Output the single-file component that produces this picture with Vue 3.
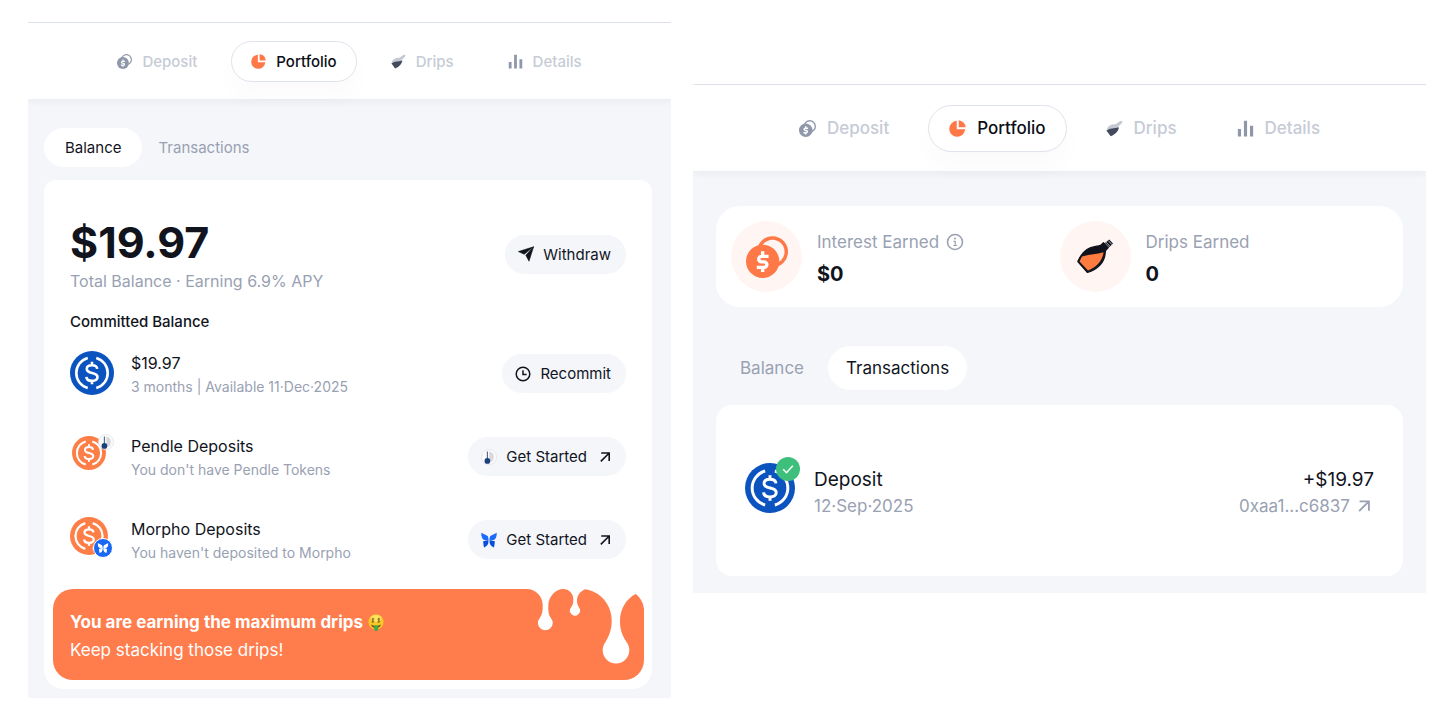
<template>
  <!-- shared shapes -->
  <svg class="sprite" aria-hidden="true">
    <symbol id="coins" viewBox="0 0 32 32">
      <circle cx="20.200" cy="12" r="10.500" fill="none" stroke="currentColor" stroke-width="2.600" />
      <circle cx="12.700" cy="19.300" r="12.700" fill="currentColor" />
      <path d="M17.200 15.500h-5.400a2.100 2.100 0 0 0 0 4.200h2a2.100 2.100 0 0 1 0 4.200H8.200M12.700 11.600v3.400M12.700 24v3.400" fill="none" stroke="#fff" stroke-width="2.600" />
    </symbol>
    <symbol id="pie" viewBox="0 0 16 16">
      <path d="M7.300 .8V8.700h7.900A7.500 7.500 0 1 1 7.300 .8z" fill="currentColor" />
      <path d="M9.200 .2a7.200 7.200 0 0 1 6.500 6.600H9.200z" fill="currentColor" />
    </symbol>
    <symbol id="flask" viewBox="0 0 16 16">
      <path d="M.6 8.700C2 5.500 5 3.800 9 4L12.800 1.300 14.600 .6l1 1.200-.9 1.500-3 2.500-.7 2z" fill="#c3c8d2" />
      <path d="M.4 9.800C3 7.700 7.500 8 12.200 6.800c-.5 3.400-3.200 6.700-7.800 8.600z" fill="#434a5c" />
    </symbol>
    <symbol id="bars" viewBox="0 0 16 16">
      <path d="M.8 8.500h3v7h-3zM6.500 .8h3v14.700h-3zM12.200 5.500h3v10h-3z" fill="currentColor" />
    </symbol>
    <symbol id="usdc" viewBox="0 0 32 32">
      <circle cx="16" cy="16" r="16" fill="currentColor" />
      <path d="M12.900 5.100a11.300 11.300 0 0 0 0 21.800M19.100 5.100a11.300 11.300 0 0 1 0 21.800" fill="none" stroke="#fff" stroke-width="1.900" />
      <path d="M19.800 13c-.2-1.700-1.600-2.600-3.800-2.600-2.300 0-3.800 1-3.800 2.700 0 4 7.800 1.800 7.800 5.800 0 1.700-1.600 2.800-4 2.800-2.300 0-4-1-4.100-2.900M16 7.800v2.600M16 21.600v2.600" fill="none" stroke="#fff" stroke-width="1.900" />
    </symbol>
    <symbol id="pendle" viewBox="0 0 18 18">
      <circle cx="9" cy="9" r="8.500" fill="#fbfbfc" stroke="#dfe2e8" stroke-width=".8" />
      <path d="M9.300 2.800a6.200 6.200 0 0 1 0 12.200z" fill="#d8d9dc" />
      <path d="M7.200 2.700v9" stroke="#52698f" stroke-width="1.300" />
      <circle cx="7.200" cy="13.400" r="3.200" fill="#1b3f7d" />
    </symbol>
    <symbol id="butterfly" viewBox="0 0 18 18">
      <path d="M.3 .8 7.500 4.600C8.300 6 8.600 8 8.400 9.700L4.500 9.400C1.500 8.500 .1 5.500 .3 .8zM17.700 .8 10.500 4.600C9.700 6 9.400 8 9.600 9.700l3.900-.3c3-.9 4.400-3.900 4.200-8.600z" fill="currentColor" />
      <path d="M8.200 9.200 2.400 10.500c.1 2.600.6 4.900 1 6.800 3-.6 5-3 5-6.500zM9.800 9.200l5.800 1.300c-.1 2.600-.6 4.900-1 6.800-3-.6-5-3-5-6.500z" fill="var(--wing, currentColor)" />
    </symbol>
    <symbol id="send" viewBox="0 0 16 16">
      <path d="M15.600 .8 .4 5.600 6.200 8.300zM15.600 .8 11 15.200 7.800 9.200z" fill="currentColor" stroke="currentColor" stroke-width=".6" stroke-linejoin="round" />
    </symbol>
    <symbol id="clock" viewBox="0 0 16 16">
      <circle cx="8" cy="8" r="6.800" fill="none" stroke="currentColor" stroke-width="1.500" />
      <path d="M8 4.200v4.300h3.600" fill="none" stroke="currentColor" stroke-width="1.500" />
    </symbol>
    <symbol id="arrow" viewBox="0 0 12 12">
      <path d="M2.200 2h8v8M10 2.200 1.800 10.400" fill="none" stroke="currentColor" stroke-width="1.600" />
    </symbol>
  </svg>

  <main class="page">
    <section v-for="panel in panels" :key="panel.id" class="panel" :class="panel.id">
      <nav class="nav">
        <a v-for="item in navItems" :key="item.label" href="#" class="nav-item" :class="{ active: item.label === 'Portfolio' }" @click.prevent>
          <svg class="nav-icon"><use :href="'#' + item.icon" /></svg>
          {{ item.label }}
        </a>
      </nav>

      <div class="content">
        <div v-if="panel.id === 'activity'" class="stats">
          <div class="stat">
            <div class="stat-icon">
              <svg class="stat-coins"><use href="#coins" /></svg>
            </div>
            <div class="stat-text">
              <div class="stat-label">
                Interest Earned
                <svg class="info" viewBox="0 0 18 18">
                  <circle cx="9" cy="9" r="7.500" fill="none" stroke="currentColor" stroke-width="1.600" />
                  <path d="M7.500 8.300H9.200v4M7.300 12.500h3.800" fill="none" stroke="currentColor" stroke-width="1.200" />
                  <circle cx="9" cy="5.600" r="1" fill="currentColor" />
                </svg>
              </div>
              <div class="stat-value">$0</div>
            </div>
          </div>
          <div class="stat">
            <div class="stat-icon">
              <svg class="stat-flask" viewBox="0 0 38 38">
                <path d="M1.800 23.500C5 16 10 9.500 19 8.500c2.500-.2 4.500-.3 6-1.500l2.500-2.300 4.800 5-2.500 2.600c-.6.900-.5 2-.7 3.800C28.300 24 22 31.500 11.500 34.500z" fill="#10131c" stroke="#10131c" stroke-width="1.200" stroke-linejoin="round" />
                <path d="M6 18.500C12 16.500 20 16.500 27.500 14.200 26.800 22 20.500 29.500 12 32.600L3.500 23.600z" fill="#ff7c40" />
                <path d="M29 5 33.200 1.500 37 5.600 33.200 9.300z" fill="#10131c" />
                <path d="m30.200 4.200 3.800 4.200M32.300 2.700l3.700 4" stroke="#d6d7da" stroke-width=".8" />
              </svg>
            </div>
            <div class="stat-text">
              <div class="stat-label">Drips Earned</div>
              <div class="stat-value">0</div>
            </div>
          </div>
        </div>

        <div class="tabs">
          <button v-for="tab in tabs" :key="tab" type="button" class="tab" :class="{ active: tab === panel.tab }" @click="panel.tab = tab">
            {{ tab }}
          </button>
        </div>

        <div v-if="panel.id === 'overview'" class="card balance-card">
          <div class="row">
            <div class="grow">
              <h1 class="total">$19.97</h1>
              <p class="total-note">Total Balance · Earning 6.9% APY</p>
            </div>
            <button type="button" class="pill">
              <svg class="pill-icon"><use href="#send" /></svg>
              Withdraw
            </button>
          </div>

          <h2 class="subhead">Committed Balance</h2>

          <div class="rows">
            <div v-for="row in rows" :key="row.title" class="row">
              <div class="token" :class="row.kind">
                <svg class="token-coin"><use href="#usdc" /></svg>
                <svg v-if="row.kind === 'pendle'" class="token-badge"><use href="#pendle" /></svg>
                <svg v-if="row.kind === 'morpho'" class="token-badge" viewBox="0 0 20 20">
                  <circle cx="10" cy="10" r="9.500" fill="#1868f5" stroke="#fff" />
                  <use href="#butterfly" x="4.500" y="4.500" width="11" height="11" />
                </svg>
              </div>
              <div class="grow">
                <div class="row-title">{{ row.title }}</div>
                <div class="row-note">{{ row.note }}</div>
              </div>
              <button type="button" class="pill">
                <svg class="pill-icon" :class="row.icon"><use :href="'#' + row.icon" /></svg>
                {{ row.action }}
                <svg v-if="row.kind !== 'plain'" class="pill-arrow"><use href="#arrow" /></svg>
              </button>
            </div>
          </div>

          <div class="banner">
            <p class="banner-title">
              You are earning the maximum drips
              <svg class="emoji" viewBox="0 0 16 17" role="img" aria-label="money face">
                <circle cx="8" cy="7.800" r="7.600" fill="#f8c928" />
                <ellipse cx="8" cy="4.500" rx="5.500" ry="3.500" fill="#fde361" />
                <path d="M3 10.200c2.500 2.200 7.500 2.200 10 0-.4 2.400-2.200 3.800-5 3.800s-4.600-1.400-5-3.800z" fill="#7b4a16" />
                <path d="M6.200 11.600h4V15a2 1.900 0 0 1-4 0z" fill="#3cae49" />
                <path d="M6.300 5c-2-.9-3 .9-1.400 1.500 1.700.7.600 2.200-1.300 1.400M4.900 3.800v5M12.200 5c-2-.9-3 .9-1.400 1.500 1.700.7.600 2.200-1.300 1.400M10.800 3.800v5" fill="none" stroke="#8a5b14" stroke-width=".9" />
              </svg>
            </p>
            <p>Keep stacking those drips!</p>
            <svg class="drips" viewBox="0 0 120 91" aria-hidden="true">
              <path d="M2.700-1V0C11.500 0 18.700 7.200 18.700 16c.3 6-.7 10-3.100 13.200a7.400 7.400 0 1 0 11.400 0C24.600 26 24 22 24.300 17 24.300 8 31 0 39.300 0c5.700 0 10 4.500 10 10 .2 4-.5 6-2.300 8.600a5 5 0 1 0 8 0c-1.600-2.600-2.200-5.600-2-7.600.2-5 4-9 8-10.700C76 2 87.700 16 87.700 31c0 9-1.700 14-6.200 22a13.300 13.300 0 1 0 21 0C97.500 45 96 40 96 32c0-12 6-22 15.700-27 5.300 4 8 10 8.300 15h1V-1z" fill="#fff" />
            </svg>
          </div>
        </div>

        <div v-else class="card activity-card">
          <div class="row">
            <div class="token tx">
              <svg class="token-coin"><use href="#usdc" /></svg>
              <svg class="token-badge" viewBox="0 0 24 24">
                <circle cx="12" cy="12" r="12" fill="#3fbf7c" />
                <path d="m7.200 12.300 3.300 3.400 6.300-7" fill="none" stroke="#fff" stroke-width="1.500" />
              </svg>
            </div>
            <div class="grow">
              <div class="row-title">Deposit</div>
              <div class="row-note">12·Sep·2025</div>
            </div>
            <div class="amount">
              <div class="row-title">+$19.97</div>
              <a href="#" class="row-note hash" @click.prevent>
                0xaa1...c6837
                <svg class="hash-arrow"><use href="#arrow" /></svg>
              </a>
            </div>
          </div>
        </div>
      </div>
    </section>
  </main>
</template>

<script setup>
import { ref } from 'vue';

const tabs = ['Balance', 'Transactions'];

const panels = ref([
  { id: 'overview', tab: 'Balance' },
  { id: 'activity', tab: 'Transactions' }
]);

const navItems = [
  { label: 'Deposit', icon: 'coins' },
  { label: 'Portfolio', icon: 'pie' },
  { label: 'Drips', icon: 'flask' },
  { label: 'Details', icon: 'bars' }
];

const rows = [
  { kind: 'plain', title: '$19.97', note: '3 months | Available 11·Dec·2025', action: 'Recommit', icon: 'clock' },
  { kind: 'pendle', title: 'Pendle Deposits', note: "You don't have Pendle Tokens", action: 'Get Started', icon: 'pendle' },
  { kind: 'morpho', title: 'Morpho Deposits', note: "You haven't deposited to Morpho", action: 'Get Started', icon: 'butterfly' }
];
</script>

<style>
body {
  margin: 0;
  background: #fff;
}
</style>

<style scoped>
.sprite {
  position: absolute;
  width: 0;
  height: 0;
}
.page {
  display: grid;
  grid-template-columns: 643fr 733fr;
  align-items: start;
  gap: 22px;
  padding: 22px 30px 24px 28px;
  font-family: Inter, "Liberation Sans", sans-serif;
  color: #11141d;
}
svg {
  display: block;
  flex: none;
}
h1, h2, p {
  margin: 0;
}
button {
  border: none;
  font-family: inherit;
  cursor: pointer;
}
a {
  color: inherit;
  text-decoration: none;
}

.panel {
  border-top: 1px solid #dde1e8;
}
.nav {
  position: relative;
  display: flex;
  justify-content: center;
  align-items: center;
  gap: 14px;
  height: 76px;
  background: #fff;
  box-shadow: 0 2px 8px rgba(30, 40, 70, 0.06);
  clip-path: inset(0 0 -40px 0);
}
.nav-item {
  display: flex;
  align-items: center;
  gap: 10px;
  box-sizing: border-box;
  height: 41px;
  padding: 0 19px;
  border: 1px solid transparent;
  border-radius: 24px;
  font-size: 15px;
  font-weight: 500;
  color: #c6cbd6;
}
.nav-item.active {
  border-color: #dfe3ec;
  background: #fff;
  box-shadow: 0 16px 24px rgba(0, 0, 0, 0.02);
  color: #0b0e16;
}
.nav-icon {
  width: 15px;
  height: 15px;
  color: #8f98ab;
}
.active .nav-icon {
  color: #ff7847;
}
.content {
  padding: 29px 19px 9px 16px;
  background: #f4f6fa;
}

.tabs {
  display: flex;
  margin-bottom: 13px;
}
.tab {
  height: 39px;
  padding: 0 16px;
  border-radius: 22px;
  background: none;
  font-size: 15px;
  color: #99a1b2;
}
.tab.active {
  padding: 0 21px;
  background: #fff;
  color: #11141d;
}

.card {
  background: #fff;
}
.balance-card {
  padding: 40px 8px 9px 9px;
  border-radius: 12px 12px 20px 20px;
}
.row {
  display: flex;
  align-items: center;
}
.balance-card .row {
  padding: 0 18px 0 17px;
}
.grow {
  flex: 1;
}
.total {
  font-size: 43px;
  line-height: 44px;
  font-weight: 700;
}
.total-note {
  margin-top: 7px;
  font-size: 16px;
  line-height: 20px;
  color: #99a1b2;
}
.subhead {
  margin: 21px 17px 19px;
  font-size: 15px;
  line-height: 20px;
  font-weight: 500;
}
.rows {
  display: grid;
  gap: 35px;
}
.row-title {
  font-size: 16px;
  line-height: 24px;
}
.row-note {
  font-size: 14px;
  line-height: 24px;
  color: #99a1b2;
}

.token {
  position: relative;
  align-self: flex-start;
  width: 44px;
  height: 44px;
  margin-right: 17px;
  color: #0b53bf;
}
.token-coin {
  width: 44px;
  height: 44px;
}
.token-badge {
  position: absolute;
}
.pendle,
.morpho {
  color: #fd7f47;
}
.pendle .token-coin {
  width: 34px;
  height: 34px;
  margin: 2px;
}
.pendle .token-badge {
  top: 0;
  right: 0;
  width: 16px;
  height: 16px;
}
.morpho .token-coin {
  width: 38px;
  height: 38px;
}
.morpho .token-badge {
  right: 1px;
  bottom: 3px;
  width: 20px;
  height: 20px;
  color: #fff;
}

.pill {
  display: flex;
  align-items: center;
  gap: 9px;
  height: 39px;
  margin-bottom: 3px;
  padding: 0 15px 0 13px;
  border-radius: 20px;
  background: #f4f6fa;
  font-size: 15px;
  color: #11141d;
}
.pill-icon {
  width: 16px;
  height: 16px;
}
.pill-icon.butterfly {
  --wing: #0a4ed8;
  color: #1a6bfa;
}
.pill-arrow {
  width: 12px;
  height: 12px;
  margin-left: 3px;
}

.banner {
  position: relative;
  margin-top: 24px;
  padding: 19px 17px 16px;
  border-radius: 20px;
  background: #ff7c4c;
  font-size: 17px;
  line-height: 28px;
  color: #fff;
}
.banner-title {
  display: flex;
  align-items: center;
  gap: 5px;
  font-weight: 700;
}
.emoji {
  width: 16px;
  height: 17px;
}
.drips {
  position: absolute;
  top: 0;
  right: 0;
  width: 120px;
  height: 91px;
  overflow: visible;
}

/* second panel is drawn at a larger scale */
.activity {
  margin-top: 62px;
}
.activity .nav {
  gap: 18px;
  height: 86px;
}
.activity .nav-item {
  gap: 11px;
  height: 47px;
  padding: 0 20px;
  font-size: 17px;
}
.activity .nav-icon {
  width: 17px;
  height: 17px;
}
.activity .content {
  padding: 35px 23px 17px;
}
.stats {
  display: grid;
  grid-template-columns: 1fr 1fr;
  margin-bottom: 39px;
  padding: 15px;
  border-radius: 24px;
  background: #fff;
}
.stat {
  display: flex;
  align-items: center;
  gap: 15px;
}
.stat-icon {
  display: grid;
  place-items: center;
  width: 71px;
  height: 71px;
  border-radius: 50%;
  background: #fff5f3;
  color: #ff7847;
}
.stat-coins {
  width: 42px;
  height: 42px;
}
.stat-flask {
  width: 38px;
  height: 38px;
}
.stat-text {
  padding-top: 2px;
}
.stat-label {
  display: flex;
  align-items: center;
  gap: 7px;
  font-size: 17px;
  line-height: 32px;
  color: #99a1b2;
}
.info {
  width: 18px;
  height: 18px;
}
.stat-value {
  font-size: 20px;
  line-height: 32px;
  font-weight: 700;
}
.activity .tabs {
  margin-bottom: 15px;
}
.activity .tab {
  height: 44px;
  padding: 0 24px;
  font-size: 17px;
}
.activity .tab.active {
  padding: 0 18px;
}
.activity-card {
  padding: 58px 29px 57px;
  border-radius: 16px;
}
.activity-card .row {
  align-items: flex-end;
}
.activity .row-title {
  font-size: 19px;
  line-height: 26px;
}
.activity .row-note {
  font-size: 17px;
  line-height: 26px;
}
.tx {
  width: 50px;
  height: 50px;
  margin-right: 19px;
  margin-bottom: 6px;
}
.tx .token-coin {
  width: 50px;
  height: 50px;
}
.tx .token-badge {
  top: -6px;
  right: -5px;
  width: 24px;
  height: 24px;
}
.amount {
  text-align: right;
}
.hash {
  display: flex;
  align-items: center;
  gap: 7px;
}
.hash-arrow {
  width: 14px;
  height: 14px;
  margin-right: 3px;
}
</style>
